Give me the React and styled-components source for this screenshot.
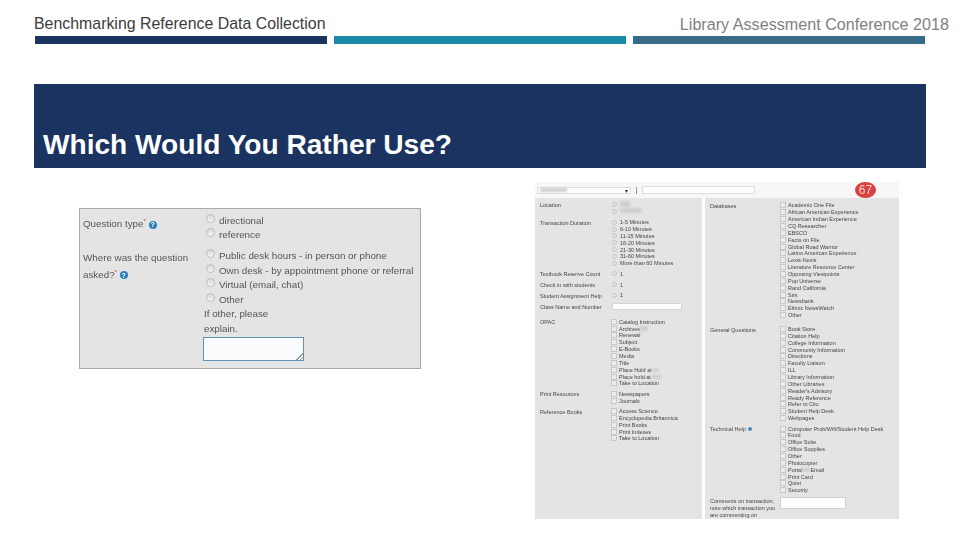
import React from "react";
import styled, { createGlobalStyle } from "styled-components";

const GlobalStyle = createGlobalStyle`
  html, body {
    margin: 0;
    padding: 0;
    background: #fff;
    font-family: "Liberation Sans", Arial, sans-serif;
  }
`;

function ShotGroup({ group, columns }) {
  return (
    <ShotRow $columns={columns} style={{ marginBottom: group.gap }}>
      <ShotLabel>
        {group.label}
        {group.help && <MiniHelp />}
      </ShotLabel>
      {group.kind === "input" ? (
        <ShotInput />
      ) : (
        <div>
          {group.rows.map((row, i) => (
            <ShotOption key={i}>
              {group.kind === "radio" ? <MiniRadio /> : <MiniCheck />}
              <span>{row}</span>
            </ShotOption>
          ))}
        </div>
      )}
    </ShotRow>
  );
}

export default function App() {
  return (
    <Slide>
      <GlobalStyle />
      <Header>
        <HeaderTitle>Benchmarking Reference Data Collection</HeaderTitle>
        <HeaderNote>Library Assessment Conference 2018</HeaderNote>
      </Header>
      <Bars>
        <Bar $color="#1b355f" />
        <Bar $color="#1a8aa8" />
        <Bar $color="#376c88" />
      </Bars>
      <Banner>
        <h1>Which Would You Rather Use?</h1>
      </Banner>
      <Content>
        <FormPanel>
          <FormGrid>
            <FormLabel>
              Question type<Star>*</Star> <Help>?</Help>
            </FormLabel>
            <FormOptions>
              <FormOption><Radio />directional</FormOption>
              <FormOption><Radio />reference</FormOption>
            </FormOptions>
          </FormGrid>
          <FormGrid>
            <FormLabel $tall>
              Where was the question
              <br />
              asked?<Star>*</Star> <Help>?</Help>
            </FormLabel>
            <FormOptions>
              <FormOption><Radio />Public desk hours - in person or phone</FormOption>
              <FormOption><Radio />Own desk - by appointment phone or referral</FormOption>
              <FormOption><Radio />Virtual (email, chat)</FormOption>
              <FormOption><Radio />Other</FormOption>
              <Explain>If other, please<br />explain.</Explain>
              <TextBox />
            </FormOptions>
          </FormGrid>
        </FormPanel>
        <Shot>
          <ShotBar>
            <ShotSelect>
              <Smudge $w={27} $h={4} />
              <Caret>▾</Caret>
            </ShotSelect>
            <ShotSep />
            <ShotSearch />
            <Badge>67</Badge>
          </ShotBar>
          <ShotPanels>
            <ShotPanel $top={3}>
              {leftGroups.map((g) => (
                <ShotGroup key={g.label} group={g} columns="71px 1fr" />
              ))}
            </ShotPanel>
            <ShotPanel $top={4}>
              {rightGroups.map((g) => (
                <ShotGroup key={g.label} group={{ ...g, kind: "check" }} columns="70px 1fr" />
              ))}
              <ShotRow $columns="70px 1fr">
                <ShotLabel>
                  Comments on transaction,
                  <br />
                  note which transaction you
                  <br />
                  are commenting on
                </ShotLabel>
                <CommentBox />
              </ShotRow>
            </ShotPanel>
          </ShotPanels>
        </Shot>
      </Content>
    </Slide>
  );
}

const Slide = styled.div`
  width: 960px;
  height: 540px;
  overflow: hidden;
  background: #fff;
`;
const Header = styled.header`
  display: flex;
  justify-content: space-between;
  padding: 15px 11px 0 34px;
  height: 21px;
  line-height: 18px;
`;
const HeaderTitle = styled.div`
  font-size: 15.9px;
  color: #3c3c3c;
`;
const HeaderNote = styled.div`
  font-size: 16.15px;
  color: #808080;
`;
const Bars = styled.div`
  display: grid;
  grid-template-columns: repeat(3, 292px);
  column-gap: 7px;
  padding-left: 35px;
`;
const Bar = styled.div`
  height: 8px;
  background: ${(p) => p.$color};
`;
const Banner = styled.section`
  margin: 40px 34px 0;
  height: 84px;
  background: #1b3360;
  display: flex;
  align-items: flex-end;
  padding-left: 9px;

  h1 {
    margin: 0 0 5px;
    font-size: 28.1px;
    line-height: 36px;
    font-weight: 700;
    color: #fff;
  }
`;
const Content = styled.main`
  display: flex;
  align-items: flex-start;
  padding: 14px 0 0 79px;
`;
const FormPanel = styled.div`
  box-sizing: border-box;
  flex: none;
  width: 342px;
  height: 161px;
  margin-top: 26px;
  margin-right: 114px;
  padding: 4px 0 0 3px;
  background: #e4e4e4;
  border: 1px solid #a9a9a9;
  color: #555;
  font-size: 9.8px;
  filter: blur(0.4px);
`;
const FormGrid = styled.div`
  display: grid;
  grid-template-columns: 121px 1fr;
  margin-bottom: 7px;
`;
const FormLabel = styled.div`
  line-height: 17px;
  padding-top: ${(p) => (p.$tall ? "0" : "2px")};
`;
const Star = styled.sup`
  color: #c33;
  font-size: 6px;
  line-height: 0;
`;
const Help = styled.span`
  display: inline-flex;
  align-items: center;
  justify-content: center;
  width: 8px;
  height: 8px;
  border-radius: 50%;
  background: #2f7fbd;
  color: #fff;
  font-size: 7px;
  font-weight: 700;
`;
const FormOptions = styled.div`
  display: flex;
  flex-direction: column;
`;
const FormOption = styled.div`
  display: flex;
  align-items: center;
  height: 14.4px;
  padding-left: 2px;
  white-space: nowrap;
`;
const Radio = styled.span`
  box-sizing: border-box;
  flex: none;
  width: 9px;
  height: 9px;
  margin: -4px 4px 0 0;
  border-radius: 50%;
  border: 1px solid #bdbdbd;
  background: linear-gradient(#d6d6d6, #f6f6f6);
`;
const Explain = styled.div`
  line-height: 14.4px;
  margin-top: 1px;
`;
const TextBox = styled.div`
  box-sizing: border-box;
  width: 101px;
  height: 24px;
  margin: 1px 0 0 -1px;
  border: 1px solid #5f92b4;
  background:
    linear-gradient(135deg, transparent 50%, #999 50%, #999 60%, transparent 60%, transparent 75%, #999 75%, #999 85%, transparent 85%)
      no-repeat right bottom / 7px 7px,
    #f9fbfc;
`;
const Shot = styled.div`
  flex: none;
  width: 364px;
  height: 337px;
  overflow: hidden;
  color: #444;
  font-size: 5.5px;
  filter: blur(0.5px);
`;
const ShotBar = styled.div`
  display: flex;
  align-items: center;
  height: 16px;
  padding: 0 2px;
  background: #f7f7f7;
`;
const ShotSelect = styled.div`
  box-sizing: border-box;
  display: flex;
  align-items: center;
  justify-content: space-between;
  width: 94px;
  height: 7px;
  padding: 0 2px;
  background: #fff;
  border: 1px solid #ddd;
`;
const Caret = styled.span`
  font-size: 6px;
  color: #333;
`;
const ShotSep = styled.div`
  width: 1px;
  height: 7px;
  margin: 0 5px 0 5px;
  background: #999;
`;
const ShotSearch = styled.div`
  box-sizing: border-box;
  width: 113px;
  height: 8px;
  background: #fff;
  border: 1px solid #ddd;
`;
const Badge = styled.div`
  display: flex;
  align-items: center;
  justify-content: center;
  width: 21px;
  height: 16px;
  margin-left: 100px;
  border-radius: 50%;
  background: #d9403e;
  color: #f5d0d0;
  font-size: 12px;
`;
const ShotPanels = styled.div`
  display: grid;
  grid-template-columns: 167px 194px;
  column-gap: 3px;
`;
const ShotPanel = styled.div`
  height: 321px;
  padding: ${(p) => p.$top}px 0 0 5px;
  background: #e4e4e4;
`;
const ShotRow = styled.div`
  display: grid;
  grid-template-columns: ${(p) => p.$columns};
  white-space: nowrap;
`;
const ShotLabel = styled.div`
  padding-top: 1px;
  line-height: 6.87px;
`;
const ShotOption = styled.div`
  display: flex;
  align-items: center;
  height: 6.87px;
`;
const MiniRadio = styled.span`
  box-sizing: border-box;
  flex: none;
  width: 5px;
  height: 5px;
  margin: 0 3px 0 1px;
  border-radius: 50%;
  border: 1px solid #c4c4c4;
`;
const MiniCheck = styled.span`
  box-sizing: border-box;
  flex: none;
  width: 6px;
  height: 6px;
  margin-right: 2px;
  border: 1px solid #c8c8c8;
  background: #ececec;
`;
const MiniHelp = styled.span`
  display: inline-block;
  width: 4px;
  height: 4px;
  margin-left: 2px;
  border-radius: 50%;
  background: #4a8ac0;
`;
const ShotInput = styled.div`
  width: 70px;
  height: 7px;
  margin-left: 1px;
  background: #fff;
  border: 1px solid #d4d4d4;
  box-sizing: border-box;
`;
const CommentBox = styled.div`
  box-sizing: border-box;
  width: 66px;
  height: 12px;
  background: #fff;
  border: 1px solid #c8d4dc;
`;
const Smudge = styled.span`
  display: inline-block;
  width: ${(p) => p.$w}px;
  height: ${(p) => p.$h}px;
  background: #cfcfcf;
  filter: blur(0.8px);
`;

const leftGroups = [
  { label: "Location", kind: "radio", rows: [<Smudge $w={10} $h={6} key="a" />, <Smudge $w={22} $h={5} key="b" />], gap: 4 },
  {
    label: "Transaction Duration",
    kind: "radio",
    rows: ["1-5 Minutes", "6-10 Minutes", "11-15 Minutes", "16-20 Minutes", "21-30 Minutes", "31-60 Minutes", "More than 60 Minutes"],
    gap: 3.5,
  },
  { label: "Textbook Reserve Count", kind: "radio", rows: ["1"], gap: 3 },
  { label: "Check in with students", kind: "radio", rows: ["1"], gap: 3 },
  { label: "Student Assignment Help", kind: "radio", rows: ["1"], gap: 3 },
  { label: "Class Name and Number", kind: "input", rows: [], gap: 7.5 },
  {
    label: "OPAC",
    kind: "check",
    rows: [
      "Catalog Instruction",
      <>Archives<Smudge $w={8} $h={5} /></>,
      "Renewal",
      "Subject",
      "E-Books",
      "Media",
      "Title",
      <>Place Hold at <Smudge $w={6} $h={4} /></>,
      <>Place hold at <Smudge $w={10} $h={4} /></>,
      "Take to Location",
    ],
    gap: 3.5,
  },
  { label: "Print Resources", kind: "check", rows: ["Newspapers", "Journals"], gap: 3.5 },
  {
    label: "Reference Books",
    kind: "check",
    rows: ["Access Science", "Encyclopedia Britannica", "Print Books", "Print Indexes", "Take to Location"],
    gap: 0,
  },
];

const rightGroups = [
  {
    label: "Databases",
    rows: [
      "Academic One File",
      "African American Experience",
      "American Indian Experience",
      "CQ Researcher",
      "EBSCO",
      "Facts on File",
      "Global Road Warrior",
      "Latino American Experience",
      "Lexis-Nexis",
      "Literature Resource Center",
      "Opposing Viewpoints",
      "Pop Universe",
      "Rand California",
      "Sirs",
      "Newsbank",
      "Ethnic NewsWatch",
      "Other",
    ],
    gap: 7,
  },
  {
    label: "General Questions",
    rows: [
      "Book Store",
      "Citation Help",
      "College Information",
      "Community Information",
      "Directions",
      "Faculty Liaison",
      "ILL",
      "Library Information",
      "Other Libraries",
      "Reader's Advisory",
      "Ready Reference",
      "Refer to Circ",
      "Student Help Desk",
      "Webpages",
    ],
    gap: 3.5,
  },
  {
    label: "Technical Help",
    help: true,
    rows: [
      "Computer Prob/Wifi/Student Help Desk",
      "Food",
      "Office Suite",
      "Office Supplies",
      "Other",
      "Photocopier",
      <>Portal<Smudge $w={8} $h={4} />Email</>,
      "Print Card",
      "Quiet",
      "Security",
    ],
    gap: 3.5,
  },
];
